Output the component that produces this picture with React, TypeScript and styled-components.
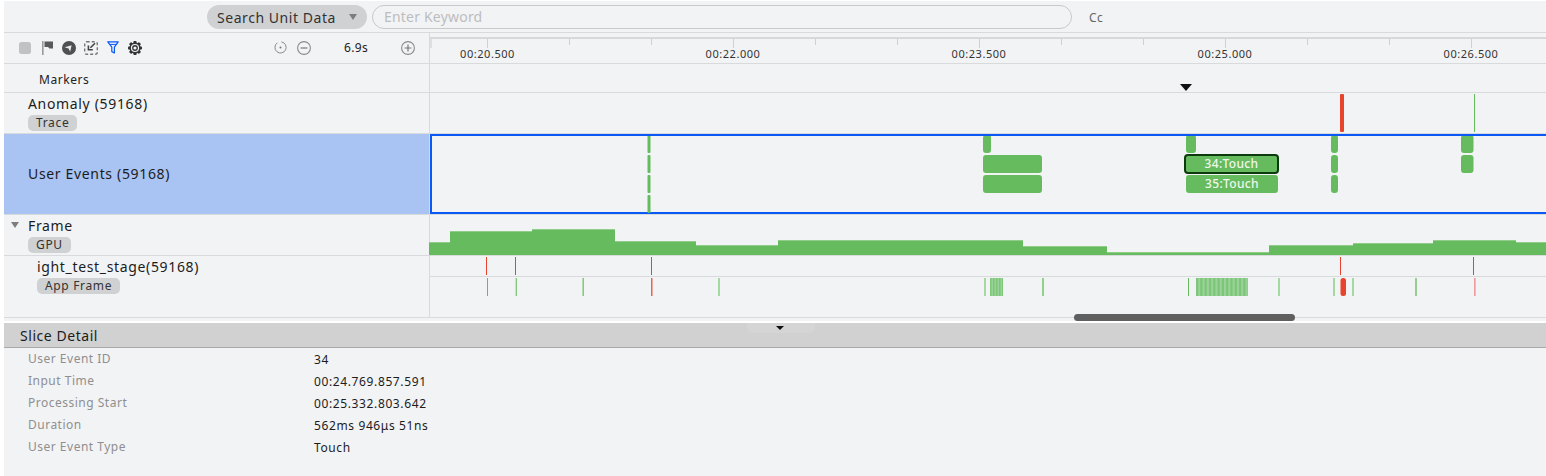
import { FC, ReactNode } from 'react';
import styled, { createGlobalStyle } from 'styled-components';

const GREEN = '#66bb5f';
const LIGHT_GREEN = '#a6d8a2';
const RED = '#e8432c';
const BLUE = '#0a59f7';
const LINE = '#d9dadc';

const GlobalStyle = createGlobalStyle`
  html, body {
    margin: 0;
    padding: 0;
    background: #fff;
  }
  body {
    font-family: "Noto Sans", "Liberation Sans", sans-serif;
    color: #1a1a1a;
  }
`;

const Page = styled('div')`
  width: 1546px;
  height: 476px;
  box-sizing: border-box;
  padding: 1px 0 0 4px;
  overflow: hidden;
  display: flex;
  flex-direction: column;
`;

const SearchBar = styled('div')`
  height: 32px;
  flex: none;
  box-sizing: border-box;
  display: flex;
  align-items: flex-start;
  padding: 4px 0 0 203px;
  background: #f2f3f5;
  border-bottom: 1px solid ${LINE};
`;

const SearchSelect = styled('div')`
  width: 160px;
  height: 24px;
  box-sizing: border-box;
  display: flex;
  align-items: center;
  justify-content: space-between;
  padding: 0 10px 0 10px;
  border-radius: 12px;
  background: #d0d1d2;
  font-size: 14px;
  letter-spacing: 0.55px;
  color: #333;
`;

const Caret = styled('span')<{ $color?: string; $w?: number; $h?: number }>`
  display: block;
  flex: none;
  width: 0;
  height: 0;
  border-left: ${(p) => (p.$w ?? 9) / 2}px solid transparent;
  border-right: ${(p) => (p.$w ?? 9) / 2}px solid transparent;
  border-top: ${(p) => p.$h ?? 6}px solid ${(p) => p.$color ?? '#7d7d7d'};
`;

const SearchInput = styled('div')`
  width: 700px;
  height: 24px;
  box-sizing: border-box;
  margin-left: 5px;
  padding-left: 11px;
  border: 1px solid #c8c9cb;
  border-radius: 12px;
  font-size: 14px;
  line-height: 21px;
  letter-spacing: 0.2px;
  color: #bdbdbd;
`;

const CaseToggle = styled('div')`
  margin-left: 17px;
  height: 24px;
  line-height: 26px;
  font-size: 12px;
  letter-spacing: 0.4px;
  color: #666;
`;

const Row = styled('div')<{ $height: number }>`
  height: ${(p) => p.$height}px;
  flex: none;
  box-sizing: border-box;
  display: flex;
  background: #f2f3f5;
  border-bottom: 1px solid ${LINE};
`;

const RowLabel = styled('div')<{ $selected?: boolean; $indent?: number }>`
  width: 426px;
  flex: none;
  box-sizing: border-box;
  display: flex;
  flex-direction: column;
  align-items: flex-start;
  padding: 3px 0 0 ${(p) => p.$indent ?? 24}px;
  background: ${(p) => (p.$selected ? '#a9c3f3' : 'transparent')};
  border-right: 1px solid ${LINE};
  position: relative;
`;

const ToolbarLabel = styled(RowLabel)`
  padding: 0;
`;

const TrackName = styled('div')`
  font-size: 14px;
  line-height: 16px;
  letter-spacing: 0.66px;
  color: #1c1c1c;
  white-space: nowrap;
`;

const CenteredName = styled(TrackName)`
  margin-top: 29px;
`;

const MarkersName = styled('div')`
  font-size: 12px;
  line-height: 16px;
  margin: 5px 0 0 11px;
  letter-spacing: 0.55px;
  color: #222;
`;

const Tag = styled('div')`
  margin-top: 3px;
  height: 16px;
  box-sizing: border-box;
  padding: 0 8px;
  border-radius: 5px;
  background: #d0d1d2;
  font-size: 12px;
  line-height: 15px;
  letter-spacing: 0.65px;
  color: #333;
  white-space: nowrap;
`;

const Collapse = styled('span')`
  position: absolute;
  left: 7px;
  top: 7px;
`;

const Lane = styled('div')<{ $selected?: boolean; $bleed?: boolean }>`
  flex: 1;
  min-width: 0;
  box-sizing: border-box;
  border: ${(p) => (p.$selected ? `2px solid ${BLUE}` : 'none')};
  border-right: none;
  margin-left: ${(p) => (p.$bleed ? '-1px' : '0')};
  position: relative;
`;

const LaneSvg = styled('svg')`
  display: block;
  overflow: hidden;
`;

const Toolbar = styled('div')`
  height: 100%;
  box-sizing: border-box;
  width: 100%;
  display: flex;
  align-items: center;
  justify-content: space-between;
  padding: 0 14px 1px 15px;
`;

const ToolGroup = styled('div')`
  display: flex;
  align-items: center;
  gap: 9px;
`;

const ZoomGroup = styled('div')`
  display: flex;
  align-items: center;
`;

const ZoomValue = styled('div')`
  width: 90px;
  text-align: center;
  font-size: 12px;
  letter-spacing: 0.35px;
  color: #222;
`;

const ToolIcon = styled('svg')<{ $gap?: number }>`
  display: block;
  flex: none;
  margin-left: ${(p) => p.$gap ?? 0}px;
`;

const Strip = styled('div')`
  height: 3px;
  flex: none;
  background: #f2f3f5;
`;

const WhiteGap = styled('div')`
  height: 2px;
  flex: none;
  background: #fff;
`;

const Scrollbar = styled('div')`
  position: absolute;
  left: 1074px;
  top: 314px;
  width: 221px;
  height: 7px;
  border-radius: 4px;
  background: #5f5f5f;
`;

const DetailHeader = styled('div')`
  height: 25px;
  flex: none;
  box-sizing: border-box;
  position: relative;
  padding-left: 16px;
  background: #d1d1d1;
  border-bottom: 1px solid #a9a9a9;
  font-size: 14px;
  line-height: 25px;
  letter-spacing: 0.55px;
  color: #1c1c1c;
`;

const DetailHandle = styled('div')`
  position: absolute;
  left: 743px;
  top: 0;
  width: 68px;
  height: 10px;
  display: flex;
  justify-content: center;
  padding: 3px 2px 0 0;
  box-sizing: border-box;
  background: #d5d5d5;
  border-radius: 0 0 6px 6px;
`;

const DetailBody = styled('div')`
  flex: 1;
  background: #f2f3f5;
  padding: 0 0 0 24px;
`;

const DetailRow = styled('div')`
  height: 22px;
  display: grid;
  grid-template-columns: 286px 1fr;
  align-items: center;
  font-size: 12px;
`;

const DetailKey = styled('div')`
  color: #8f8f8f;
  letter-spacing: 0.5px;
  margin-top: -1px;
`;

const DetailValue = styled('div')`
  color: #1c1c1c;
  letter-spacing: 0.62px;
`;

const rulerTicks = Array.from({ length: 13 }, (_, i) => 487 + 82 * i).filter((x) => x < 1546);
const rulerLabels = [
  { x: 487.5, text: '00:20.500' },
  { x: 733, text: '00:22.000' },
  { x: 979, text: '00:23.500' },
  { x: 1225, text: '00:25.000' },
  { x: 1471, text: '00:26.500' },
];

const Ruler = () => (
  <LaneSvg width={1116} height={30} viewBox="430 33 1116 30">
    <rect x={430} y={37} width={1116} height={2} fill="#d7d8da" />
    <rect x={430} y={39} width={2} height={9} fill="#dedfe1" />
    {rulerTicks.map((x, i) => (
      <rect key={x} x={x} y={39} width={1} height={i % 3 === 0 ? 9 : 6} fill="#cfd0d2" />
    ))}
    {rulerLabels.map((l) => (
      <text
        key={l.x}
        x={l.x}
        y={58}
        textAnchor="middle"
        fontSize={11}
        letterSpacing={0.55}
        fill="#333"
        fontFamily={'"Noto Sans", sans-serif'}
      >
        {l.text}
      </text>
    ))}
  </LaneSvg>
);

const MarkerLane = () => (
  <LaneSvg width={1116} height={28} viewBox="430 64 1116 28">
    <polygon points="1180,84 1192,84 1186,91" fill="#111" />
  </LaneSvg>
);

const AnomalyLane = () => (
  <LaneSvg width={1116} height={40} viewBox="430 93 1116 40">
    <rect x={1340} y={94} width={4} height={38} rx={1} fill={RED} />
    <rect x={1474} y={94} width={1} height={38} fill={GREEN} />
  </LaneSvg>
);

const eventSlices = [
  { x: 647.5, row: 0, w: 3 },
  { x: 647.5, row: 1, w: 3 },
  { x: 647.5, row: 2, w: 3 },
  { x: 647.5, row: 3, w: 3 },
  { x: 983, row: 0, w: 8 },
  { x: 983, row: 1, w: 59 },
  { x: 983, row: 2, w: 59 },
  { x: 1186, row: 0, w: 10 },
  { x: 1186, row: 2, w: 92, label: '35:Touch' },
  { x: 1331, row: 0, w: 7 },
  { x: 1331, row: 1, w: 7 },
  { x: 1331, row: 2, w: 7 },
  { x: 1461, row: 0, w: 12.5 },
  { x: 1461, row: 1, w: 12.5 },
];

const SliceLabel: FC<{ x: number; y: number; children: ReactNode }> = ({ x, y, children }) => (
  <text
    x={x}
    y={y}
    textAnchor="middle"
    fontSize={12}
    fontWeight={500}
    letterSpacing={0.35}
    fill="#eef7ec"
    fontFamily={'"Noto Sans", sans-serif'}
  >
    {children}
  </text>
);

const UserEventsLane = () => (
  <LaneSvg width={1114} height={77} viewBox="432 136 1114 77">
    {eventSlices.map((s) => {
      const y = 135 + s.row * 20;
      return (
        <g key={`${s.x}_${s.row}`}>
          <rect x={s.x} y={y} width={s.w} height={18} rx={s.w > 4 ? 3 : 1} fill={GREEN} />
          {s.label && (
            <SliceLabel x={s.x + s.w / 2} y={y + 13}>
              {s.label}
            </SliceLabel>
          )}
        </g>
      );
    })}
    <rect x={1185} y={155} width={93} height={18} rx={3} fill={GREEN} stroke="#0c3a0c" strokeWidth={2} />
    <SliceLabel x={1231.5} y={168}>
      34:Touch
    </SliceLabel>
  </LaneSvg>
);

const gpuSteps: [number, number, number][] = [
  [429, 450, 242],
  [450, 532, 231],
  [532, 615, 229],
  [615, 696, 241],
  [696, 778, 245],
  [778, 1023, 240],
  [1023, 1107, 246],
  [1107, 1269, 252],
  [1269, 1353, 245],
  [1353, 1433, 243],
  [1433, 1516, 240],
  [1516, 1546, 242],
];

const GpuLane = () => (
  <LaneSvg width={1117} height={40} viewBox="429 215 1117 40">
    {gpuSteps.map(([from, to, top]) => (
      <g key={from}>
        <rect x={from} y={top} width={to - from} height={255 - top} fill={GREEN} />
        <rect x={from} y={top} width={to - from} height={1} fill="#8fcd88" />
      </g>
    ))}
  </LaneSvg>
);

const threadTicks = [486, 515, 651, 1340, 1473];

const appFrames: { x: number; w: number; color: string }[] = [
  { x: 487, w: 1, color: GREEN },
  { x: 515, w: 1, color: '#c5e4c2' },
  { x: 516, w: 1, color: '#85c97f' },
  { x: 582, w: 1, color: '#b5dcb1' },
  { x: 583, w: 1, color: '#85c97f' },
  { x: 651, w: 1, color: '#ea6350' },
  { x: 652, w: 1, color: '#f3a89d' },
  { x: 718, w: 2, color: LIGHT_GREEN },
  { x: 984, w: 2, color: LIGHT_GREEN },
  { x: 1042, w: 2, color: '#93cf8d' },
  { x: 1188, w: 1, color: GREEN },
  { x: 1278, w: 2, color: LIGHT_GREEN },
  { x: 1333, w: 2, color: LIGHT_GREEN },
  { x: 1352, w: 2, color: LIGHT_GREEN },
  { x: 1415, w: 2, color: '#93cf8d' },
  { x: 1474, w: 1, color: '#ee9aa0' },
  { x: 1475, w: 1, color: '#f3b9bd' },
];

const stripes = (from: number, to: number, step: number, width: number) =>
  Array.from({ length: Math.ceil((to - from) / step) }, (_, i) => {
    const x = from + i * step;
    return { x, w: Math.min(width, to - x) };
  });

const AppFrameLane = () => (
  <LaneSvg width={1116} height={61} viewBox="430 256 1116 61">
    {threadTicks.map((x) => (
      <rect key={x} x={x} y={257} width={1} height={18} fill={RED} />
    ))}
    <rect x={430} y={276} width={1116} height={1} fill={LINE} />
    {appFrames.map((f) => (
      <rect key={`${f.x}`} x={f.x} y={278} width={f.w} height={18} fill={f.color} />
    ))}
    <rect x={990} y={278} width={13} height={18} fill="#9ad39a" />
    {stripes(990, 1003, 3, 1.5).map((s) => (
      <rect key={s.x} x={s.x} y={278} width={s.w} height={18} fill="#7dc577" />
    ))}
    <rect x={1196} y={278} width={52} height={18} fill="#9ad39a" />
    {stripes(1196, 1248, 4.3, 2.2).map((s) => (
      <rect key={s.x} x={s.x} y={278} width={s.w} height={18} fill="#7dc577" />
    ))}
    <rect x={1340.5} y={278} width={5.5} height={18} rx={2.5} fill={RED} />
  </LaneSvg>
);

const StopIcon = () => (
  <ToolIcon width={12} height={12} viewBox="0 0 12 12">
    <rect x={0} y={0} width={12} height={12} rx={2.5} fill="#c2c2c2" />
  </ToolIcon>
);

const FlagIcon = () => (
  <ToolIcon width={11} height={14} viewBox="0 0 11 14" $gap={2}>
    <rect x={0} y={0} width={1.6} height={14} fill="#9a9a9a" />
    <path d="M2.5 0.5 H11 V7.5 H7.5 L6 6 H2.5 Z" fill="#5a5a5a" />
  </ToolIcon>
);

const GlobeIcon = () => (
  <ToolIcon width={14} height={14} viewBox="0 0 14 14">
    <circle cx={7} cy={7} r={7} fill="#505050" />
    <path d="M2.6 6.2 L9.6 4.2 L8.2 10.8 L6.6 7.6 Z" fill="#e9eaec" />
  </ToolIcon>
);

const ImportIcon = () => (
  <ToolIcon width={14} height={14} viewBox="0 0 14 14" $gap={-1}>
    <rect x={0.7} y={0.7} width={12.6} height={12.6} rx={2} fill="none" stroke="#777" strokeWidth={1.4} strokeDasharray="3 2" />
    <path d="M11 2.2 L6.4 6.8 M4.4 4.6 V8.8 H8.8" fill="none" stroke="#444" strokeWidth={1.6} />
  </ToolIcon>
);

const FilterIcon = () => (
  <ToolIcon width={12} height={13} viewBox="0 0 12 13">
    <path d="M0.8 0.8 H11.2 L7.4 6.2 V12 L4.8 10.6 V6.2 Z" fill="none" stroke={BLUE} strokeWidth={1.2} strokeLinejoin="round" />
    <path d="M3 3.4 H9" stroke={BLUE} strokeWidth={1} />
  </ToolIcon>
);

const gearTeeth = [0, 45, 90, 135];

const GearIcon = () => (
  <ToolIcon width={14} height={14} viewBox="0 0 14 14">
    {gearTeeth.map((deg) => (
      <rect key={deg} x={5.4} y={0} width={3.2} height={14} rx={0.8} fill="#333" transform={`rotate(${deg} 7 7)`} />
    ))}
    <circle cx={7} cy={7} r={5.6} fill="#333" />
    <circle cx={7} cy={7} r={4.1} fill="#f2f3f5" />
    <circle cx={7} cy={7} r={2.9} fill="#333" />
    <circle cx={7} cy={7} r={1.6} fill="#f2f3f5" />
  </ToolIcon>
);

const TimerIcon = () => (
  <ToolIcon width={13} height={13} viewBox="0 0 13 13">
    <path d="M7.4 0.9 A5.6 5.6 0 1 1 3.4 1.8" fill="none" stroke="#8a8a8a" strokeWidth={1} />
    <circle cx={6.5} cy={6.5} r={1} fill="#777" />
  </ToolIcon>
);

const MinusIcon = () => (
  <ToolIcon width={14} height={14} viewBox="0 0 14 14" $gap={10}>
    <circle cx={7} cy={7} r={6.4} fill="none" stroke="#8a8a8a" strokeWidth={1.1} />
    <path d="M3.6 7 H10.4" stroke="#777" strokeWidth={1.2} />
  </ToolIcon>
);

const PlusIcon = () => (
  <ToolIcon width={14} height={14} viewBox="0 0 14 14">
    <circle cx={7} cy={7} r={6.4} fill="none" stroke="#8a8a8a" strokeWidth={1.1} />
    <path d="M3.6 7 H10.4 M7 3.6 V10.4" stroke="#777" strokeWidth={1.2} />
  </ToolIcon>
);

const details = [
  { key: 'User Event ID', value: '34' },
  { key: 'Input Time', value: '00:24.769.857.591' },
  { key: 'Processing Start', value: '00:25.332.803.642' },
  { key: 'Duration', value: '562ms 946μs 51ns' },
  { key: 'User Event Type', value: 'Touch' },
];

const App = () => {
  return (
    <Page>
      <GlobalStyle />
      <SearchBar>
        <SearchSelect>
          Search Unit Data
          <Caret />
        </SearchSelect>
        <SearchInput>Enter Keyword</SearchInput>
        <CaseToggle>Cc</CaseToggle>
      </SearchBar>

      <Row $height={31}>
        <ToolbarLabel>
          <Toolbar>
            <ToolGroup>
              <StopIcon />
              <FlagIcon />
              <GlobeIcon />
              <ImportIcon />
              <FilterIcon />
              <GearIcon />
            </ToolGroup>
            <ZoomGroup>
              <TimerIcon />
              <MinusIcon />
              <ZoomValue>6.9s</ZoomValue>
              <PlusIcon />
            </ZoomGroup>
          </Toolbar>
        </ToolbarLabel>
        <Lane>
          <Ruler />
        </Lane>
      </Row>

      <Row $height={29}>
        <RowLabel>
          <MarkersName>Markers</MarkersName>
        </RowLabel>
        <Lane>
          <MarkerLane />
        </Lane>
      </Row>

      <Row $height={41}>
        <RowLabel>
          <TrackName>Anomaly (59168)</TrackName>
          <Tag>Trace</Tag>
        </RowLabel>
        <Lane>
          <AnomalyLane />
        </Lane>
      </Row>

      <Row $height={81}>
        <RowLabel $selected>
          <CenteredName>User Events (59168)</CenteredName>
        </RowLabel>
        <Lane $selected>
          <UserEventsLane />
        </Lane>
      </Row>

      <Row $height={41}>
        <RowLabel>
          <Collapse>
            <Caret $w={9} $h={6} />
          </Collapse>
          <TrackName>Frame</TrackName>
          <Tag>GPU</Tag>
        </RowLabel>
        <Lane $bleed>
          <GpuLane />
        </Lane>
      </Row>

      <Row $height={62}>
        <RowLabel $indent={33}>
          <TrackName>ight_test_stage(59168)</TrackName>
          <Tag>App Frame</Tag>
        </RowLabel>
        <Lane>
          <AppFrameLane />
        </Lane>
      </Row>

      <Strip />
      <WhiteGap />
      <Scrollbar />

      <DetailHeader>
        Slice Detail
        <DetailHandle>
          <Caret $color="#111" $w={8} $h={4} />
        </DetailHandle>
      </DetailHeader>
      <DetailBody>
        {details.map((d) => (
          <DetailRow key={d.key}>
            <DetailKey>{d.key}</DetailKey>
            <DetailValue>{d.value}</DetailValue>
          </DetailRow>
        ))}
      </DetailBody>
    </Page>
  );
};

export default App;
